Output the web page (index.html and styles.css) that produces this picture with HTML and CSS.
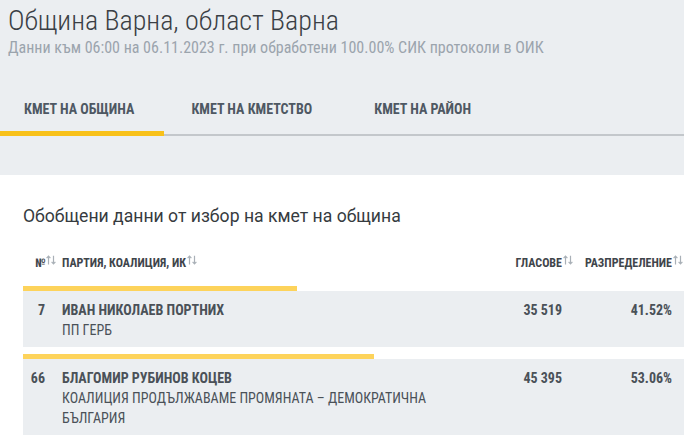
FILE: index.html
```html
<!DOCTYPE html>
<html lang="bg">
<head>
<meta charset="utf-8">
<title>Община Варна</title>
<link rel="stylesheet" href="styles.css">
</head>
<body>
<header class="top">
  <h1 class="title">Община Варна, област Варна</h1>
  <div class="sub">Данни към 06:00 на 06.11.2023 г. при обработени 100.00% СИК протоколи в ОИК</div>
  <nav class="tabs">
    <div class="tab tab-first active">КМЕТ НА ОБЩИНА</div>
    <div class="tab">КМЕТ НА КМЕТСТВО</div>
    <div class="tab">КМЕТ НА РАЙОН</div>
  </nav>
</header>
<main class="content">
  <h2 class="heading">Обобщени данни от избор на кмет на община</h2>
  <div class="table">
    <div class="thead">
      <div class="th th-num">№<svg class="sort" viewBox="0 0 10 10" width="10" height="10"><path d="M2.5 9.5V1.2M0.6 3.2L2.5 1.2L4.4 3.2" fill="none" stroke="#a9b0b7" stroke-width="1.2"/><path d="M7.5 0.8V8.8M5.6 6.8L7.5 8.8L9.4 6.8" fill="none" stroke="#a9b0b7" stroke-width="1.2"/></svg></div>
      <div class="th th-name">ПАРТИЯ, КОАЛИЦИЯ, ИК<svg class="sort" viewBox="0 0 10 10" width="10" height="10"><path d="M2.5 9.5V1.2M0.6 3.2L2.5 1.2L4.4 3.2" fill="none" stroke="#a9b0b7" stroke-width="1.2"/><path d="M7.5 0.8V8.8M5.6 6.8L7.5 8.8L9.4 6.8" fill="none" stroke="#a9b0b7" stroke-width="1.2"/></svg></div>
      <div class="th th-votes">ГЛАСОВЕ<svg class="sort sort-end" viewBox="0 0 10 10" width="10" height="10"><path d="M2.5 9.5V1.2M0.6 3.2L2.5 1.2L4.4 3.2" fill="none" stroke="#a9b0b7" stroke-width="1.2"/><path d="M7.5 0.8V8.8M5.6 6.8L7.5 8.8L9.4 6.8" fill="none" stroke="#a9b0b7" stroke-width="1.2"/></svg></div>
      <div class="th th-pct">РАЗПРЕДЕЛЕНИЕ<svg class="sort sort-end" viewBox="0 0 10 10" width="10" height="10"><path d="M2.5 9.5V1.2M0.6 3.2L2.5 1.2L4.4 3.2" fill="none" stroke="#a9b0b7" stroke-width="1.2"/><path d="M7.5 0.8V8.8M5.6 6.8L7.5 8.8L9.4 6.8" fill="none" stroke="#a9b0b7" stroke-width="1.2"/></svg></div>
    </div>

    <div class="entry">
      <div class="bar" style="width:41.52%"></div>
      <div class="row">
        <div class="td td-num">7</div>
        <div class="td td-name"><div class="cand">ИВАН НИКОЛАЕВ ПОРТНИХ</div><div class="party">ПП ГЕРБ</div></div>
        <div class="td td-votes">35 519</div>
        <div class="td td-pct">41.52%</div>
      </div>
    </div>

    <div class="entry">
      <div class="bar" style="width:53.06%"></div>
      <div class="row">
        <div class="td td-num">66</div>
        <div class="td td-name"><div class="cand">БЛАГОМИР РУБИНОВ КОЦЕВ</div><div class="party">КОАЛИЦИЯ ПРОДЪЛЖАВАМЕ ПРОМЯНАТА – ДЕМОКРАТИЧНА БЪЛГАРИЯ</div></div>
        <div class="td td-votes">45 395</div>
        <div class="td td-pct">53.06%</div>
      </div>
    </div>
  </div>
</main>
</body>
</html>
```
FILE: styles.css
```css
* { box-sizing: border-box; }
html, body { margin: 0; padding: 0; }
body {
  background: #ffffff;
  font-family: Roboto, "Noto Sans", "Liberation Sans", sans-serif;
  color: #444b52;
  overflow: hidden;
}
.top {
  background: #ebeef1;
  height: 175px;
  padding-top: 4px;
}
.title {
  margin: 0;
  padding-left: 8px;
  font-size: 28px;
  font-weight: 300;
  line-height: 34px;
  color: #3a3f45;
  font-stretch: condensed;
}
.sub {
  padding-left: 8px;
  margin-top: 1px;
  font-size: 16px;
  line-height: 18px;
  color: #9ba4ad;
  font-stretch: condensed;
}
.tabs {
  display: flex;
  margin-top: 32px;
  border-bottom: 2px solid #c3c7cb;
}
.tab {
  padding: 12px 35px 14px 27px;
  font-size: 14px;
  line-height: 16px;
  font-weight: 700;
  color: #4e5863;
  font-stretch: condensed;
  margin-bottom: -2px;
  border-bottom: 5px solid transparent;
}
.tab-first { padding-left: 24px; padding-right: 30px; }
.tab.active { border-bottom-color: #f8c11a; }
.content {
  padding: 29px 0 0 23px;
}
.heading {
  margin: 0;
  font-size: 17.6px;
  font-weight: 400;
  line-height: 24px;
  color: #363b40;
}
.table {
  width: 661px;
  margin-top: 27px;
}
.thead, .row {
  display: grid;
  grid-template-columns: 22px 425px 92px 110px;
  padding-right: 12px;
}
.th {
  font-size: 12px;
  font-weight: 700;
  line-height: 16px;
  color: #3f454b;
  font-stretch: condensed;
  white-space: nowrap;
}
.th-num { padding-left: 12px; }
.th-name { padding-left: 17px; }
.th-votes, .th-pct { text-align: right; }
.sort {
  vertical-align: 2px;
  margin-left: 1px;
}
.sort-end { margin-right: -11px; }
.thead { height: 31px; }
.entry { margin-bottom: 7px; }
.bar {
  height: 5px;
  background: #fdd35b;
}
.row {
  background: #ebeef1;
  padding-top: 9px;
  padding-bottom: 7px;
}
.td {
  font-size: 14px;
  line-height: 20px;
}
.td-num, .td-votes, .td-pct {
  font-weight: 700;
  text-align: right;
  color: #4a5158;
  font-stretch: condensed;
}
.td-name { padding-left: 17px; padding-right: 40px; }
.cand {
  font-weight: 700;
  color: #4a5158;
  font-stretch: condensed;
}
.party {
  font-weight: 400;
  color: #4a5158;
  font-stretch: condensed;
}
```
